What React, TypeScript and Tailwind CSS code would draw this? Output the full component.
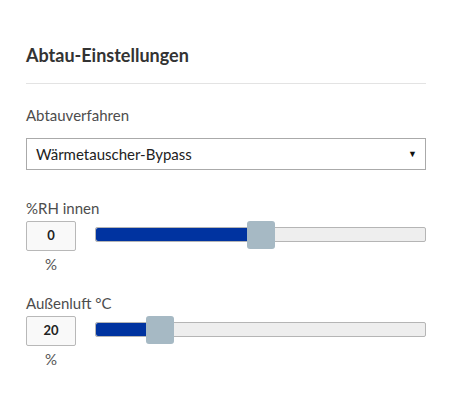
import React from "react";

function SliderRow({ label, value, pct, gap }: { label: string; value: string; pct: number; gap: string }) {
  return (
    <div className={gap}>
      <div className="text-[15px] leading-[18px] text-[#4d4d4d]">{label}</div>
      <div className="mt-[4px] flex items-start">
        <div className="flex w-[50px] flex-col items-center">
          <div className="flex h-[30px] w-[50px] items-center justify-center rounded-[2px] border border-[#b8b8b8] bg-[#f9f9f9] text-[13px] font-bold text-[#222]">
            {value}
          </div>
          <div className="mt-[5px] text-[15px] leading-[16px] text-[#555]">%</div>
        </div>
        <div className="relative ml-[19px] mt-[6px] h-[15px] flex-1 rounded-[2px] border border-[#b5b5b5] bg-[#eeeeee]">
          <div className="h-full rounded-l-[2px] bg-[#0033a0]" style={{ width: `${pct}%` }} />
          <div
            className="absolute top-[-7px] h-[28px] w-[28px] -translate-x-1/2 rounded-[3px] bg-[#a6b9c4]"
            style={{ left: `${pct}%` }}
          />
        </div>
      </div>
    </div>
  );
}

export default function App() {
  return (
    <div className="h-[414px] w-[465px] bg-white px-[26px] pt-[44px] font-['Lato','Open_Sans',sans-serif]">
      <h2 className="text-[18px] font-bold leading-[22px] text-[#333]">Abtau-Einstellungen</h2>
      <div className="mt-[17px] h-px w-[400px] bg-[#e3e3e3]" />
      <div className="mt-[22px] text-[15px] leading-[18px] text-[#4d4d4d]">Abtauverfahren</div>
      <div className="mt-[14px] flex h-[32px] w-[400px] items-center justify-between border border-[#aaaaaa] bg-white pl-[9px] pr-[8px]">
        <span className="text-[15px] text-[#222]">Wärmetauscher-Bypass</span>
        <span className="text-[9px] text-[#111]">▼</span>
      </div>
      <div className="w-[400px]">
        <SliderRow label="%RH innen" value="0" pct={50} gap="mt-[29px]" />
        <SliderRow label="Außenluft °C" value="20" pct={19.5} gap="mt-[22px]" />
      </div>
    </div>
  );
}
